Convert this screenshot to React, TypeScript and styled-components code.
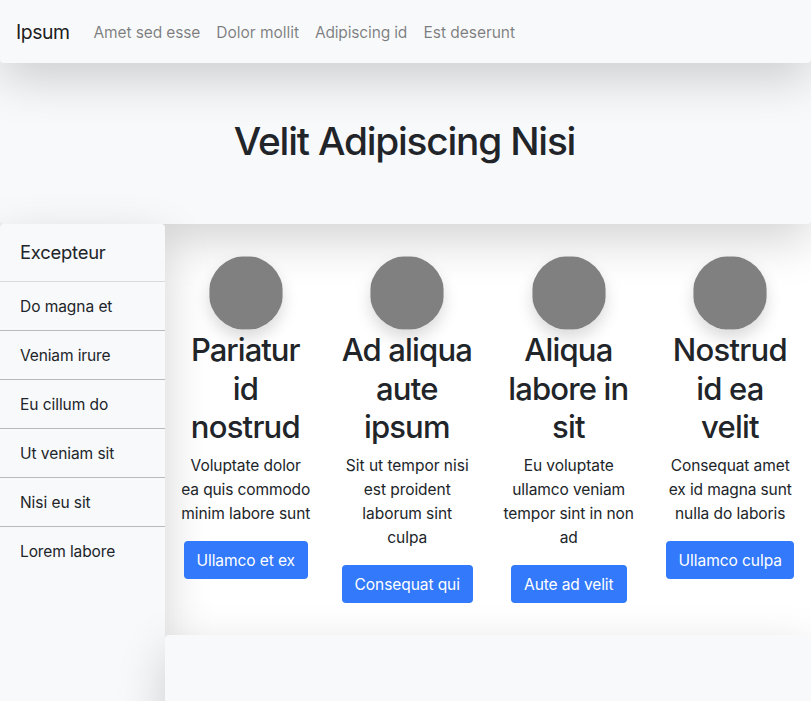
import React from 'react';
import styled, { createGlobalStyle } from 'styled-components';

const SURFACE = '#f8f9fb';
const INK = '#212529';
const SHADOW_LG = '0 16px 48px rgba(0, 0, 0, 0.175)';

const GlobalStyle = createGlobalStyle`
  *, *::before, *::after { box-sizing: border-box; }
  body {
    margin: 0;
    background: #fff;
    color: ${INK};
    font-family: Inter, "Liberation Sans", sans-serif;
    font-size: 15.52px;
    line-height: 24px;
  }
  h1, h2, h3, p, ul { margin: 0; padding: 0; font-weight: inherit; }
  a { color: inherit; text-decoration: none; }
`;

const Page = styled.div`
  height: 701px;
  overflow: hidden;
`;

const Navbar = styled.nav`
  position: relative;
  z-index: 1;
  display: flex;
  align-items: center;
  height: 63px;
  padding: 2px 16px 0;
  background: ${SURFACE};
  border-radius: 4px;
  box-shadow: ${SHADOW_LG};
`;

const Brand = styled.a`
  width: 61.5px;
  padding-bottom: 2px;
  font-size: 19.4px;
  letter-spacing: -0.42px;
  line-height: 30px;
  color: rgba(0, 0, 0, 0.9);
`;

const NavItem = styled.a<{ $width: number; $tracking: number }>`
  width: ${p => p.$width}px;
  margin-left: 16px;
  letter-spacing: ${p => p.$tracking}px;
  white-space: nowrap;
  color: rgba(0, 0, 0, 0.5);
`;

const Hero = styled.header`
  display: flex;
  align-items: center;
  justify-content: center;
  height: 161px;
  padding: 0 2px 5px 0;
  background: ${SURFACE};
  border-radius: 4px;
  box-shadow: ${SHADOW_LG};
`;

const HeroTitle = styled.h1`
  font-size: 38.8px;
  font-weight: 540;
  line-height: 48px;
  letter-spacing: -1.2px;
`;

const Body = styled.div`
  display: grid;
  grid-template-columns: 165px 1fr;
  height: 620px;
`;

const Sidebar = styled.aside`
  background: ${SURFACE};
  border-radius: 4px;
  box-shadow: ${SHADOW_LG};
`;

const SidebarHeader = styled.h3`
  height: 58px;
  padding: 14px 20px;
  border-bottom: 1px solid #d9dadc;
  font-size: 18.4px;
  line-height: 29px;
  letter-spacing: -0.22px;
`;

const SidebarItem = styled.li<{ $tracking: number }>`
  height: 49px;
  padding: 13px 20px 11px;
  list-style: none;
  letter-spacing: ${p => p.$tracking}px;
  border-bottom: 1px solid #b9babc;
  &:last-child { border-bottom: 0; }
`;

const Main = styled.main`
  position: relative;
  display: flex;
  flex-direction: column;
`;

const Features = styled.section`
  display: grid;
  grid-template-columns: repeat(4, 1fr);
  height: 411px;
  padding-top: 32px;
`;

const Feature = styled.article`
  display: flex;
  flex-direction: column;
  align-items: center;
  text-align: center;
  white-space: nowrap;
`;

const AvatarFrame = styled.div`
  width: 74px;
  height: 74px;
  border-radius: 50%;
  box-shadow: 0 8px 16px rgba(0, 0, 0, 0.15);
`;

const AvatarDrawing = styled.svg`
  display: block;
  width: 74px;
  height: 74px;
`;

const FeatureTitle = styled.h2`
  margin: 1.4px 0 7.4px;
  font-size: 31.04px;
  font-weight: 540;
  line-height: 38.4px;
`;

const FeatureText = styled.p`
  margin-bottom: 15px;
`;

const Line = styled.span<{ $tracking: number }>`
  display: block;
  margin-right: ${p => -p.$tracking}px;
  letter-spacing: ${p => p.$tracking}px;
`;

const Button = styled.a<{ $width: number; $tracking: number }>`
  width: ${p => p.$width}px;
  height: 38px;
  padding: 8px 0 6px;
  border-radius: 4px;
  background: #3279fb;
  color: #fff;
  letter-spacing: ${p => p.$tracking}px;
`;

const Footer = styled.footer`
  flex: 1;
  background: ${SURFACE};
  border-radius: 4px;
  box-shadow: ${SHADOW_LG};
`;

type Tracked = [text: string, tracking: number];
type Sized = [text: string, width: number, tracking: number];

const navItems: Sized[] = [
  ['Amet sed esse', 106.8, -0.12],
  ['Dolor mollit', 82.6, -0.03],
  ['Adipiscing id', 92.6, -0.16],
  ['Est deserunt', 92, -0.04],
];

const sidebarItems: Tracked[] = [
  ['Do magna et', -0.06],
  ['Veniam irure', -0.13],
  ['Eu cillum do', -0.06],
  ['Ut veniam sit', -0.06],
  ['Nisi eu sit', -0.07],
  ['Lorem labore', -0.12],
];

const features: { title: Tracked[]; text: Tracked[]; action: Sized }[] = [
  {
    title: [['Pariatur', -0.98], ['id', -0.8], ['nostrud', -0.77]],
    text: [['Voluptate dolor', -0.09], ['ea quis commodo', -0.12], ['minim labore sunt', -0.055]],
    action: ['Ullamco et ex', 124, -0.09],
  },
  {
    title: [['Ad aliqua', -0.85], ['aute', -0.8], ['ipsum', -0.88]],
    text: [['Sit ut tempor nisi', -0.02], ['est proident', -0.06], ['laborum sint', -0.06], ['culpa', -0.06]],
    action: ['Consequat qui', 131, -0.08],
  },
  {
    title: [['Aliqua', -0.8], ['labore in', -0.87], ['sit', -0.8]],
    text: [['Eu voluptate', -0.06], ['ullamco veniam', -0.1], ['tempor sint in non', -0.09], ['ad', -0.06]],
    action: ['Aute ad velit', 116, -0.12],
  },
  {
    title: [['Nostrud', -0.74], ['id ea', -0.8], ['velit', -0.8]],
    text: [['Consequat amet', -0.1], ['ex id magna sunt', -0.12], ['nulla do laboris', -0.06]],
    action: ['Ullamco culpa', 128, -0.06],
  },
];

const Lines = ({ lines }: { lines: Tracked[] }) => (
  <>
    {lines.map(([text, tracking]) => (
      <Line key={text} $tracking={tracking}>{text}</Line>
    ))}
  </>
);

// The inner viewport trims the disc slightly on all four sides.
const Avatar = () => (
  <AvatarFrame>
    <AvatarDrawing viewBox="0 0 74 74" aria-hidden="true">
      <svg x="0.4" y="0.4" width="73.2" height="73.2" overflow="hidden">
        <circle cx="36.6" cy="36.6" r="37.2" fill="#808080" />
      </svg>
    </AvatarDrawing>
  </AvatarFrame>
);

export default function App() {
  return (
    <Page>
      <GlobalStyle />
      <Navbar>
        <Brand href="#">Ipsum</Brand>
        {navItems.map(([text, width, tracking]) => (
          <NavItem key={text} href="#" $width={width} $tracking={tracking}>{text}</NavItem>
        ))}
      </Navbar>
      <Hero>
        <HeroTitle>Velit Adipiscing Nisi</HeroTitle>
      </Hero>
      <Body>
        <Sidebar>
          <SidebarHeader>Excepteur</SidebarHeader>
          <ul>
            {sidebarItems.map(([text, tracking]) => (
              <SidebarItem key={text} $tracking={tracking}>{text}</SidebarItem>
            ))}
          </ul>
        </Sidebar>
        <Main>
          <Features>
            {features.map(({ title, text, action }) => (
              <Feature key={action[0]}>
                <Avatar />
                <FeatureTitle><Lines lines={title} /></FeatureTitle>
                <FeatureText><Lines lines={text} /></FeatureText>
                <Button href="#" $width={action[1]} $tracking={action[2]}>{action[0]}</Button>
              </Feature>
            ))}
          </Features>
          <Footer />
        </Main>
      </Body>
    </Page>
  );
}
